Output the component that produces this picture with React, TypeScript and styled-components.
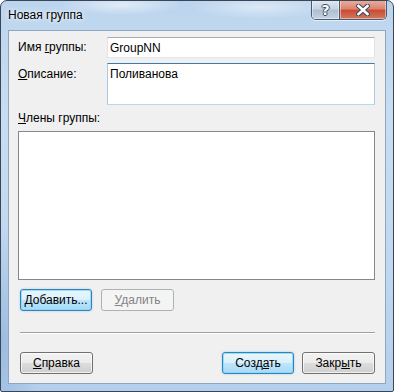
import styled, { createGlobalStyle } from "styled-components";

const GlobalStyle = createGlobalStyle`
	html, body {
		margin: 0;
		padding: 0;
		background: #ffffff;
	}
	* {
		box-sizing: border-box;
	}
`;

const Window = styled.div`
	width: 394px;
	height: 392px;
	display: flex;
	flex-direction: column;
	padding: 0 7px 7px 7px;
	border: 1px solid #3a4656;
	border-radius: 7px 7px 2px 2px;
	font-family: "Liberation Sans", Arial, sans-serif;
	font-size: 12px;
	color: #000;
	background:
		radial-gradient(ellipse 60px 10px at 120px 4px, rgba(255, 255, 255, 0.55), transparent),
		radial-gradient(ellipse 70px 12px at 260px 6px, rgba(255, 255, 255, 0.45), transparent),
		radial-gradient(ellipse 40px 120px at 0px 340px, rgba(120, 160, 210, 0.45), transparent),
		linear-gradient(180deg, #bcd5ee 0%, #c8ddf2 30%, #bfd7ef 70%, #b4cfec 100%);
	overflow: hidden;
`;

const TitleBar = styled.div`
	height: 29px;
	display: flex;
	align-items: flex-start;
	justify-content: space-between;
`;

const Title = styled.div`
	padding-top: 7px;
	font-size: 12px;
	line-height: 15px;
	color: #000;
	text-shadow: 0 0 6px rgba(255, 255, 255, 0.9), 0 0 3px rgba(255, 255, 255, 0.9);
`;

const CaptionButtons = styled.div`
	display: flex;
	margin-top: -1px;
	margin-right: -1px;
	border: 1px solid #4a5a70;
	border-top: none;
	border-radius: 0 0 5px 5px;
	overflow: hidden;
	box-shadow: 0 1px 0 rgba(255, 255, 255, 0.6);
`;

const CaptionButton = styled.div<{ $close?: boolean }>`
	width: ${(p) => (p.$close ? 47 : 27)}px;
	height: 19px;
	display: flex;
	align-items: center;
	justify-content: center;
	box-shadow: inset 0 0 0 1px rgba(255, 255, 255, 0.45);
	background: ${(p) =>
		p.$close
			? "linear-gradient(180deg, #e8b0a2 0%, #dd8670 45%, #c94d33 55%, #d2785f 100%)"
			: "linear-gradient(180deg, #e2ebf4 0%, #c6d4e3 45%, #aebfd2 55%, #c5d4e3 100%)"};
	& + & {
		border-left: 1px solid #4a5a70;
	}
`;

const HelpGlyph = styled.span`
	font-family: "DejaVu Sans", sans-serif;
	font-weight: bold;
	font-size: 14px;
	line-height: 14px;
	color: #fff;
	text-shadow: -1px 0 #3b4a5e, 1px 0 #3b4a5e, 0 -1px #3b4a5e, 0 1px #3b4a5e;
`;

const Client = styled.div`
	flex: 1;
	display: flex;
	flex-direction: column;
	background: #f0f0f0;
	border: 1px solid #8fa6bf;
	padding: 6px 10px 0 9px;
`;

const FieldRow = styled.div`
	display: grid;
	grid-template-columns: 89px 1fr;
	align-items: start;
	& + & {
		margin-top: 5px;
	}
`;

const Label = styled.label<{ $offset?: number }>`
	line-height: 15px;
	padding-top: ${(p) => p.$offset ?? 3}px;
	white-space: nowrap;
`;

const TextInput = styled.input`
	height: 21px;
	width: 100%;
	margin: 0;
	padding: 0 2px;
	font-family: "Liberation Sans", Arial, sans-serif;
	font-size: 12px;
	color: #000;
	background: #fff;
	border: 1px solid #e2e3ea;
	border-top-color: #abadb3;
	border-bottom-color: #e3e9ef;
	outline: none;
`;

const TextArea = styled.textarea`
	height: 42px;
	width: 100%;
	margin: 0;
	display: block;
	padding: 3px 2px;
	font-family: "Liberation Sans", Arial, sans-serif;
	font-size: 12px;
	line-height: 15px;
	color: #000;
	background: #fff;
	border: 1px solid #a9cbe6;
	border-top-color: #3d7bad;
	border-bottom-color: #b7d9ed;
	resize: none;
	outline: none;
	overflow: hidden;
`;

const SectionLabel = styled.div`
	margin-top: 6px;
	line-height: 15px;
`;

const ListBox = styled.div`
	margin-top: 5px;
	height: 149px;
	background: #fff;
	border: 1px solid #828790;
`;

const ButtonRow = styled.div<{ $top: number; $spread?: boolean }>`
	display: flex;
	gap: 9px;
	margin-top: ${(p) => p.$top}px;
	padding-left: 2px;
	justify-content: ${(p) => (p.$spread ? "space-between" : "flex-start")};
`;

const Group = styled.div`
	display: flex;
	gap: 8px;
`;

const Button = styled.div<{ $variant?: "default" | "disabled" }>`
	width: ${(p) => (p.$variant === "default" ? 72 : 73)}px;
	height: 22px;
	display: flex;
	align-items: center;
	justify-content: center;
	border-radius: 3px;
	font-size: 12px;
	border: 1px solid
		${(p) =>
			p.$variant === "default"
				? "#3c7fb1"
				: p.$variant === "disabled"
					? "#adb2b5"
					: "#707070"};
	color: ${(p) => (p.$variant === "disabled" ? "#838383" : "#000")};
	background: ${(p) =>
		p.$variant === "default"
			? "linear-gradient(180deg, #eaf6fd 0%, #d9f0fc 50%, #bee6fd 50%, #a7d9f5 100%)"
			: p.$variant === "disabled"
				? "#f4f4f4"
				: "linear-gradient(180deg, #f2f2f2 0%, #ebebeb 50%, #dddddd 50%, #cfcfcf 100%)"};
	box-shadow: ${(p) =>
		p.$variant === "default"
			? "inset 0 0 0 1px rgba(120, 220, 255, 0.8), 0 0 2px rgba(60, 160, 230, 0.5)"
			: p.$variant === "disabled"
				? "none"
				: "inset 0 0 0 1px rgba(255, 255, 255, 0.7)"};
`;

const Separator = styled.div`
	margin: 21px 0 0 2px;
	height: 1px;
	background: #a0a0a0;
	box-shadow: 0 1px 0 #ffffff;
`;

export default function App() {
	return (
		<>
			<GlobalStyle />
			<Window>
				<TitleBar>
					<Title>Новая группа</Title>
					<CaptionButtons>
						<CaptionButton>
							<HelpGlyph>?</HelpGlyph>
						</CaptionButton>
						<CaptionButton $close>
							<svg width="14" height="12" viewBox="0 0 14 12">
								<path
									d="M2.5 2 L11.5 10 M11.5 2 L2.5 10"
									stroke="#3b4a5e"
									strokeWidth="4.6"
									strokeLinecap="square"
								/>
								<path
									d="M2.5 2 L11.5 10 M11.5 2 L2.5 10"
									stroke="#ffffff"
									strokeWidth="2.6"
									strokeLinecap="square"
								/>
							</svg>
						</CaptionButton>
					</CaptionButtons>
				</TitleBar>
				<Client>
					<FieldRow>
						<Label>
							Имя <u>г</u>руппы:
						</Label>
						<TextInput readOnly defaultValue="GroupNN" />
					</FieldRow>
					<FieldRow>
						<Label $offset={4}>
							<u>О</u>писание:
						</Label>
						<TextArea readOnly defaultValue="Поливанова" />
					</FieldRow>
					<SectionLabel>
						<u>Ч</u>лены группы:
					</SectionLabel>
					<ListBox />
					<ButtonRow $top={9}>
						<Button $variant="default">
							<span>
								<u>Д</u>обавить...
							</span>
						</Button>
						<Button $variant="disabled">
							<span>
								<u>У</u>далить
							</span>
						</Button>
					</ButtonRow>
					<Separator />
					<ButtonRow $top={19} $spread>
						<Button>
							<span>
								<u>С</u>правка
							</span>
						</Button>
						<Group>
							<Button $variant="default">
								<span>
									Созд<u>а</u>ть
								</span>
							</Button>
							<Button>
								<span>
									Закр<u>ы</u>ть
								</span>
							</Button>
						</Group>
					</ButtonRow>
				</Client>
			</Window>
		</>
	);
}
